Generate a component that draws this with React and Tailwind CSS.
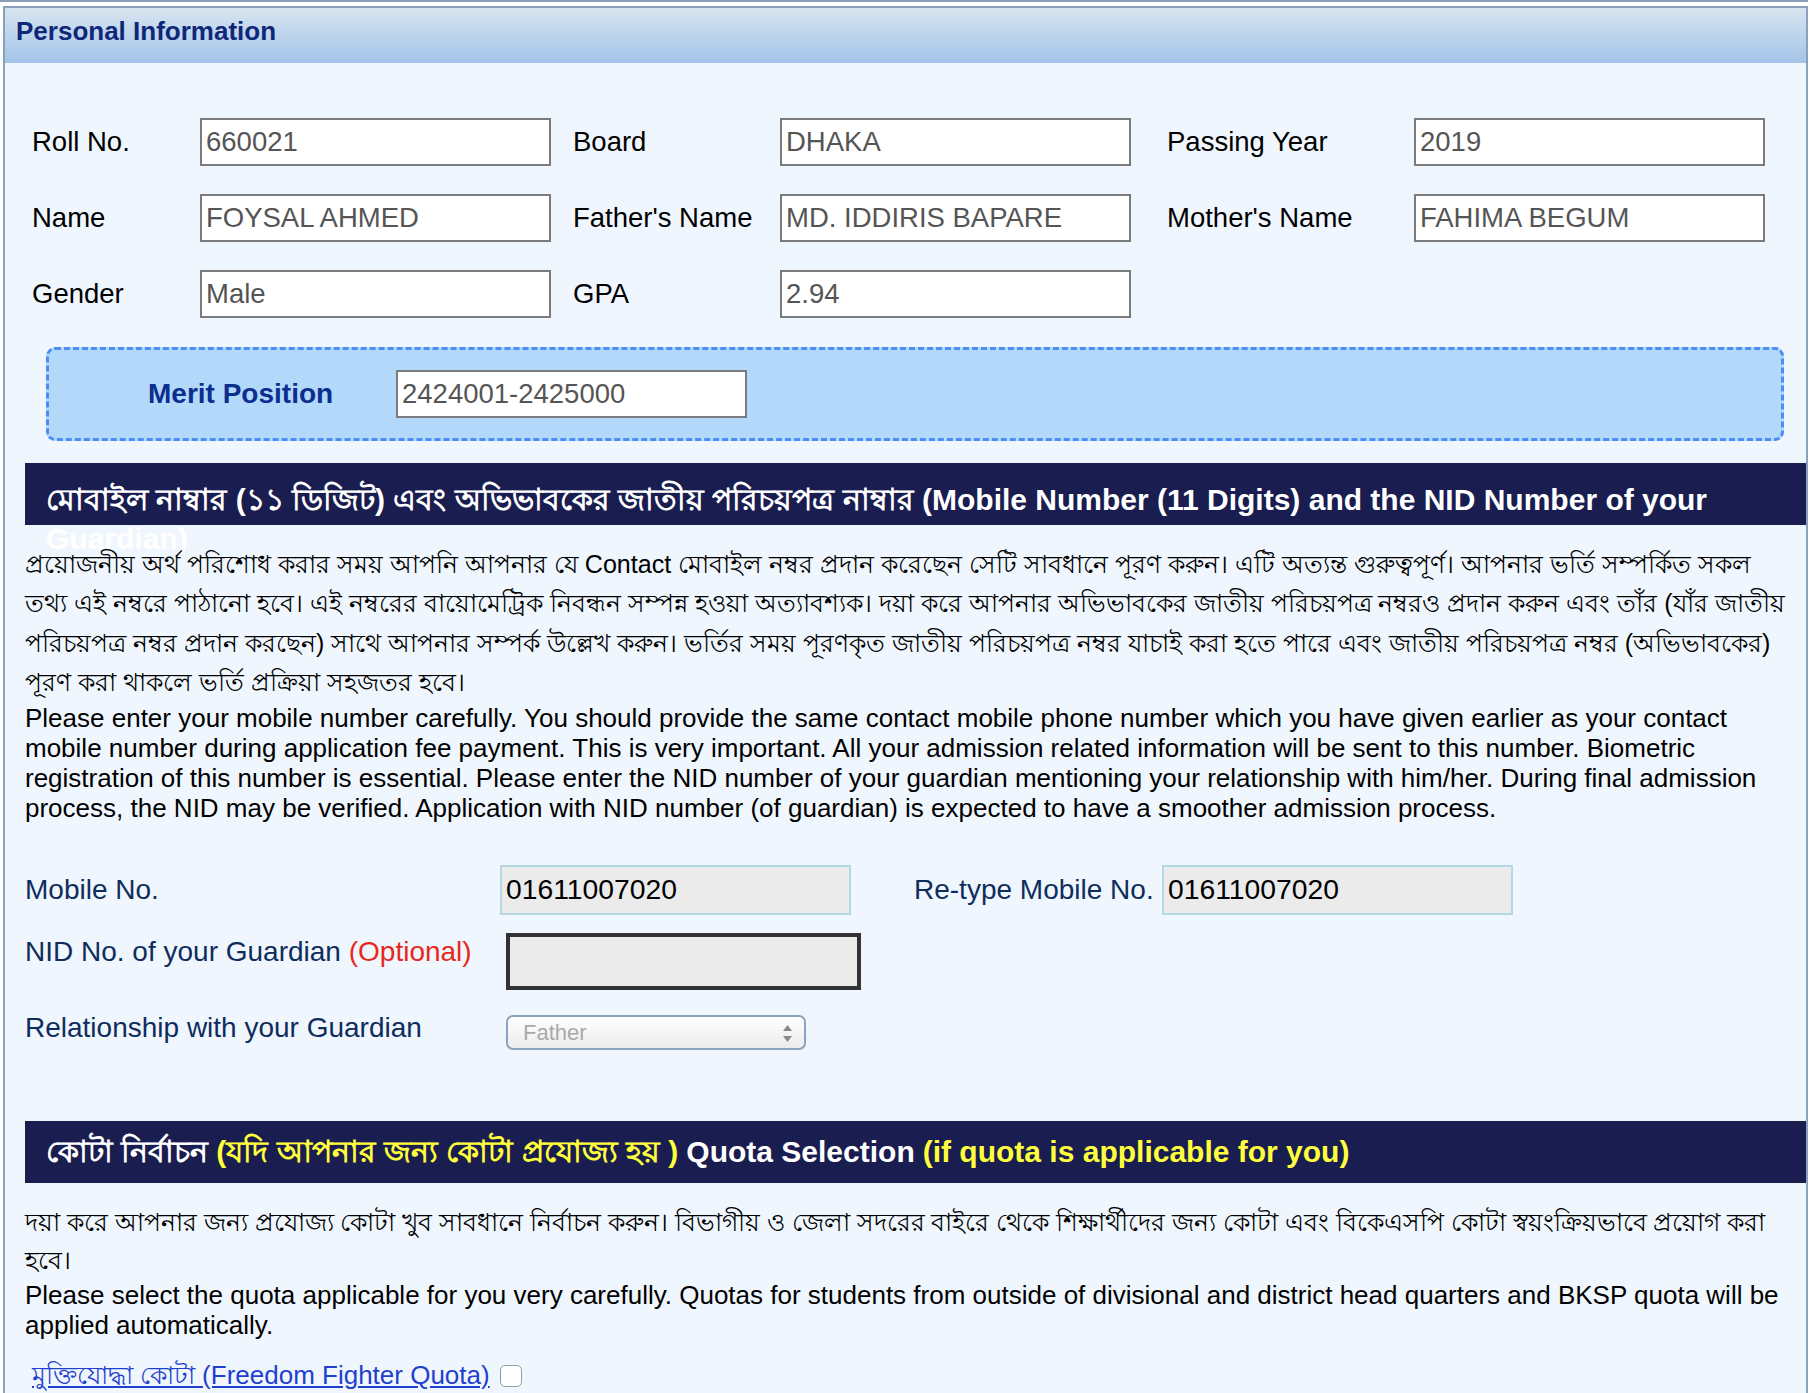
import React from 'react';

const ROWS = [
    [
        { label: 'Roll No.', value: '660021' },
        { label: 'Board', value: 'DHAKA' },
        { label: 'Passing Year', value: '2019' },
    ],
    [
        { label: 'Name', value: 'FOYSAL AHMED' },
        { label: "Father's Name", value: 'MD. IDDIRIS BAPARE' },
        { label: "Mother's Name", value: 'FAHIMA BEGUM' },
    ],
    [
        { label: 'Gender', value: 'Male' },
        { label: 'GPA', value: '2.94' },
    ],
];

const BN_MOBILE = [
    'প্রয়োজনীয় অর্থ পরিশোধ করার সময় আপনি আপনার যে Contact মোবাইল নম্বর প্রদান করেছেন সেটি সাবধানে পূরণ করুন। এটি অত্যন্ত গুরুত্বপূর্ণ। আপনার ভর্তি সম্পর্কিত সকল',
    'তথ্য এই নম্বরে পাঠানো হবে। এই নম্বরের বায়োমেট্রিক নিবন্ধন সম্পন্ন হওয়া অত্যাবশ্যক। দয়া করে আপনার অভিভাবকের জাতীয় পরিচয়পত্র নম্বরও প্রদান করুন এবং তাঁর (যাঁর জাতীয়',
    'পরিচয়পত্র নম্বর প্রদান করছেন) সাথে আপনার সম্পর্ক উল্লেখ করুন। ভর্তির সময় পূরণকৃত জাতীয় পরিচয়পত্র নম্বর যাচাই করা হতে পারে এবং জাতীয় পরিচয়পত্র নম্বর (অভিভাবকের)',
    'পূরণ করা থাকলে ভর্তি প্রক্রিয়া সহজতর হবে।',
];

function Field({ value }) {
    return (
        <input
            readOnly
            value={value}
            className="h-[48px] w-[351px] border-2 border-[#7b7b7b] bg-white px-[4px] text-[27.5px] text-[#555] outline-none"
        />
    );
}

function Bar({ children, className = '' }) {
    return (
        <div className={`h-[62px] bg-[#1a1d50] pl-[21px] text-[30px] font-bold text-white ${className}`}>
            {children}
        </div>
    );
}

export default function App() {
    return (
        <div className="min-h-screen bg-white font-['Liberation_Sans',Arial,sans-serif]">
            <div className="h-[2px] w-[1808px] bg-[#8aa0b8]" />
            <div className="ml-[3px] mt-[4px] min-h-[1400px] w-[1805px] border-2 border-[#8aa0bc] bg-[#eff6fd]">
                <div className="h-[55px] bg-gradient-to-b from-[#d8e5f0] to-[#a2c3e9] pl-[11px] pt-[8px]">
                    <span className="text-[26px] font-bold leading-[30px] text-[#0f2779]">Personal Information</span>
                </div>

                <div className="grid grid-cols-[168px_373px_207px_387px_247px_351px] gap-y-[28px] pl-[27px] pt-[55px]">
                    {ROWS.map((row) =>
                        row.map((f) => (
                            <React.Fragment key={f.label}>
                                <div className="flex items-center text-[27.5px] text-black">{f.label}</div>
                                <div className="flex items-center">
                                    <Field value={f.value} />
                                </div>
                            </React.Fragment>
                        ))
                    )}
                </div>

                <div className="ml-[41px] mt-[29px] flex h-[94px] w-[1738px] items-center rounded-[9px] border-[3px] border-dashed border-[#4d8cf5] bg-[#b3d9fa] pl-[99px]">
                    <div className="w-[248px] text-[28px] font-bold text-[#0b2e8f]">Merit Position</div>
                    <Field value="2424001-2425000" />
                </div>

                <div className="mt-[22px] pl-[20px]">
                    <Bar className="pt-[17px] leading-[39px]">
                        মোবাইল নাম্বার (১১ ডিজিট) এবং অভিভাবকের জাতীয় পরিচয়পত্র নাম্বার (Mobile Number (11 Digits) and the NID Number of your Guardian)
                    </Bar>
                    <div className="mt-[20px] text-[25.1px] leading-[39.4px] text-black">
                        {BN_MOBILE.map((l) => (
                            <div key={l} className="whitespace-nowrap">{l}</div>
                        ))}
                    </div>
                    <p className="text-[26px] leading-[30px] text-black">
                        Please enter your mobile number carefully. You should provide the same contact mobile phone number which you have given earlier as your contact mobile number during application fee payment. This is very important. All your admission related information will be sent to this number. Biometric registration of this number is essential. Please enter the NID number of your guardian mentioning your relationship with him/her. During final admission process, the NID may be verified. Application with NID number (of guardian) is expected to have a smoother admission process.
                    </p>

                    <div className="mt-[42px] text-[28px] text-[#0f2d5c]">
                        <div className="flex h-[50px] items-center">
                            <div className="w-[475px]">Mobile No.</div>
                            <input
                                readOnly
                                value="01611007020"
                                className="h-[50px] w-[351px] border-2 border-[#b3d8e4] bg-[#ebebeb] px-[4px] text-[28.3px] text-black outline-none"
                            />
                            <div className="ml-[63px] w-[248px]">Re-type Mobile No.</div>
                            <input
                                readOnly
                                value="01611007020"
                                className="h-[50px] w-[351px] border-2 border-[#b3d8e4] bg-[#ebebeb] px-[4px] text-[28.3px] text-black outline-none"
                            />
                        </div>

                        <div className="mt-[18px] flex items-start">
                            <div className="w-[481px] pt-[7px] leading-[24px]">
                                NID No. of your Guardian <span className="text-[#e8281c]">(Optional)</span>
                            </div>
                            <input
                                readOnly
                                value=""
                                className="h-[57px] w-[355px] border-[4px] border-[#333] bg-[#ebebeb] outline-none"
                            />
                        </div>

                        <div className="mt-[25px] flex items-start">
                            <div className="w-[481px] leading-[25px]">Relationship with your Guardian</div>
                            <div className="relative flex h-[35px] w-[300px] items-center rounded-[7px] border-2 border-[#8aa3be] bg-gradient-to-b from-white to-[#ececec] pl-[15px] text-[22px] text-[#a9a9a9]">
                                Father
                                <svg className="absolute right-[12px] top-[8px]" width="9" height="17" viewBox="0 0 9 17">
                                    <path d="M4.5 0 L9 6 L0 6 Z" fill="#8a8a8a" />
                                    <path d="M4.5 17 L9 11 L0 11 Z" fill="#8a8a8a" />
                                </svg>
                            </div>
                        </div>
                    </div>

                    <Bar className="mt-[71px] flex items-center whitespace-nowrap">
                        <span>কোটা নির্বাচন </span>
                        <span className="ml-[8px] text-[#ffff3c]">(যদি আপনার জন্য কোটা প্রযোজ্য হয় )</span>
                        <span className="ml-[8px]">Quota Selection</span>
                        <span className="ml-[8px] text-[#ffff3c]">(if quota is applicable for you)</span>
                    </Bar>

                    <div className="mt-[21.5px] text-[24.8px] leading-[38px] text-black">
                        <div className="whitespace-nowrap">
                            দয়া করে আপনার জন্য প্রযোজ্য কোটা খুব সাবধানে নির্বাচন করুন। বিভাগীয় ও জেলা সদরের বাইরে থেকে শিক্ষার্থীদের জন্য কোটা এবং বিকেএসপি কোটা স্বয়ংক্রিয়ভাবে প্রয়োগ করা
                        </div>
                        <div>হবে।</div>
                    </div>
                    <p className="text-[26px] leading-[30px] text-black">
                        Please select the quota applicable for you very carefully. Quotas for students from outside of divisional and district head quarters and BKSP quota will be applied automatically.
                    </p>

                    <div className="mt-[16px] flex items-center pl-[7px]">
                        <a href="#" className="text-[26px] text-[#1f3fcf] underline">
                            <span className="text-[24.8px]">মুক্তিযোদ্ধা কোটা</span> (Freedom Fighter Quota)
                        </a>
                        <span className="ml-[10px] inline-block h-[22px] w-[22px] rounded-[5px] border border-[#9a9a9a] bg-white" />
                    </div>
                </div>
            </div>
        </div>
    );
}
